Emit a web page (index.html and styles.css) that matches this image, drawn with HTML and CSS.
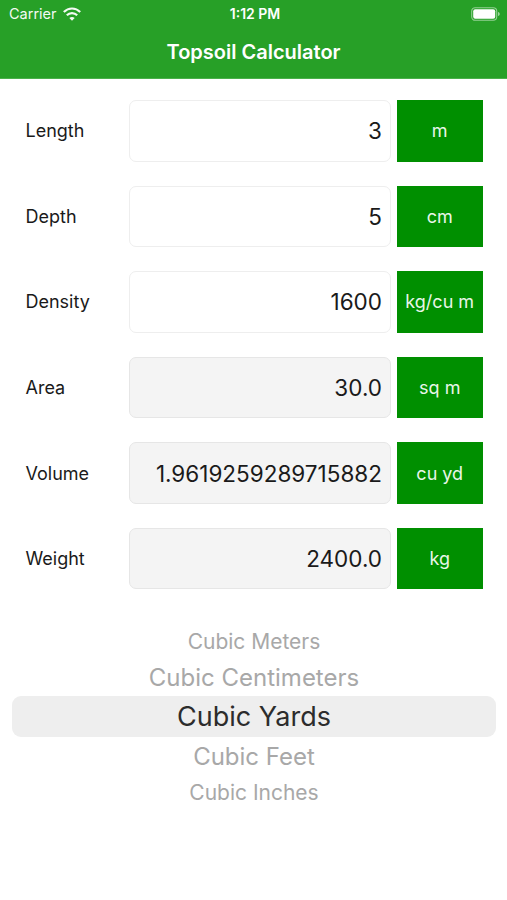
FILE: index.html
```html
<!DOCTYPE html>
<html lang="en">
<head>
<meta charset="utf-8">
<title>Topsoil Calculator</title>
<link rel="stylesheet" href="styles.css">
</head>
<body>
<header class="header">
  <div class="status">
    <div class="carrier"><span>Carrier</span>
      <svg class="wifi" viewBox="0 0 18 14" width="18" height="14" fill="none" stroke="#fff" stroke-width="2.2"><path d="M.8 5C5.5.3 12.500 .3 17.200 5"/><path d="M3.800 8.200C6.700 5.300 11.300 5.300 14.200 8.200"/><path d="M9 13.700L6.300 11C7.700 9.500 10.300 9.500 11.700 11Z" fill="#fff" stroke="none"/></svg>
    </div>
    <time class="time">1:12 PM</time>
    <svg class="battery" viewBox="0 0 30 14" width="30" height="14"><rect x=".7" y=".7" width="25" height="12.600" rx="3.500" fill="none" stroke="#fff" stroke-opacity=".5" stroke-width="1.100"/><rect x="2.200" y="2.200" width="22" height="9.600" rx="2" fill="#fff"/><path d="M27 5C29.300 5.500 29.300 8.500 27 9Z" fill="#fff" fill-opacity=".55"/></svg>
  </div>
  <h1 class="title">Topsoil Calculator</h1>
</header>
<main>
  <section class="form">
    <div class="row"><span class="label">Length</span><div class="field">3</div><div class="unit">m</div></div>
    <div class="row"><span class="label">Depth</span><div class="field">5</div><div class="unit">cm</div></div>
    <div class="row"><span class="label">Density</span><div class="field">1600</div><div class="unit">kg/cu m</div></div>
    <div class="row"><span class="label">Area</span><div class="field result">30.0</div><div class="unit">sq m</div></div>
    <div class="row"><span class="label">Volume</span><div class="field result">1.9619259289715882</div><div class="unit">cu yd</div></div>
    <div class="row"><span class="label">Weight</span><div class="field result">2400.0</div><div class="unit">kg</div></div>
  </section>
  <section class="picker">
    <div class="option far"><span>Cubic Meters</span></div>
    <div class="option near"><span>Cubic Centimeters</span></div>
    <div class="option selected"><span>Cubic Yards</span></div>
    <div class="option near"><span>Cubic Feet</span></div>
    <div class="option far"><span>Cubic Inches</span></div>
  </section>
</main>
</body>
</html>
```
FILE: styles.css
```css
* { box-sizing: border-box; }
body {
  margin: 0;
  height: 900px;
  overflow: hidden;
  background: #fff;
  color: #1a1a1a;
  font-family: Inter, "Liberation Sans", sans-serif;
}
.header {
  height: 79px;
  background: #27a027;
  color: #fff;
  border-bottom: 1px solid #4ab14a;
}
.status {
  height: 27px;
  padding: 0 6px 0 9px;
  display: grid;
  grid-template-columns: 1fr auto 1fr;
  align-items: center;
  font-size: 14.5px;
}
.carrier { display: flex; align-items: center; gap: 6px; opacity: .95; }
.time { font-weight: 600; font-size: 14px; }
.battery { justify-self: end; }
.title {
  margin: 0;
  font-size: 20px;
  line-height: 50px;
  font-weight: 600;
  text-align: center;
}
.form {
  padding: 21px 24.5px 0 25.5px;
  display: grid;
  gap: 24.1px;
}
.row {
  display: grid;
  grid-template-columns: 97px 262.5px 85.500px;
  column-gap: 0;
  height: 61.5px;
  justify-content: space-between;
  align-items: stretch;
}
.label { align-self: center; font-size: 18px; }
.field {
  display: flex;
  align-items: center;
  justify-content: flex-end;
  margin-right: 0;
  padding-right: 8px;
  border: 1px solid #eee;
  border-radius: 7px;
  font-size: 22.5px;
}
.result { background: #f4f4f4; border-color: #e6e6e6; }
.unit {
  display: flex;
  align-items: center;
  justify-content: center;
  background: #008f00;
  color: #e9f6e9;
  font-size: 18px;
}
.row { grid-template-columns: 97px 262.5px 85.5px; }
.picker { padding: 35px 11px 0 12px; }
.option {
  display: flex;
  align-items: center;
  justify-content: center;
  white-space: nowrap;
  color: #a8a8a8;
}
.near { height: 38px; font-size: 24px; }
.far { height: 34px; font-size: 21px; }
.selected {
  height: 41px;
  border-radius: 9px;
  background: #eee;
  color: #2c2c2c;
  font-size: 27px;
}
```
